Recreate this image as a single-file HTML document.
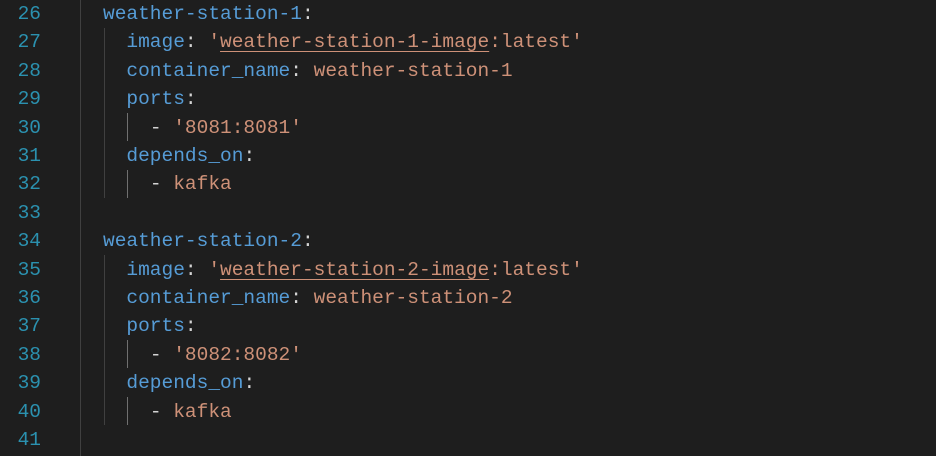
<!DOCTYPE html>
<html><head><style>
body{margin:0;background:#1e1e1e;width:936px;height:456px;overflow:hidden;position:relative;font-family:"Liberation Mono",monospace;font-size:19.5px;}
.l{position:absolute;left:0;height:28.4px;line-height:28.4px;white-space:pre;}
.n{position:absolute;left:0;width:41px;text-align:right;color:#2b91af;}
.c{position:absolute;left:103px;}
.k{color:#569cd6}.s{color:#ce9178}.p{color:#d4d4d4}
.u{text-decoration:underline;text-decoration-color:#ce9178;text-underline-offset:4px;}
.g{position:absolute;width:1px;background:#404040;}
</style></head><body>
<div class="g" style="left:80px;top:0;height:456px"></div>
<div class="g" style="left:104px;top:28px;height:170px"></div>
<div class="g" style="left:104px;top:255px;height:170px"></div>
<div class="g" style="left:127px;top:113px;height:28px;background:#707070"></div>
<div class="g" style="left:127px;top:170px;height:28px;background:#707070"></div>
<div class="g" style="left:127px;top:340px;height:28px;background:#707070"></div>
<div class="g" style="left:127px;top:397px;height:28px;background:#707070"></div>
<div class="l" style="top:0"><span class="n">26</span><span class="c"><span class="k">weather-station-1</span><span class="p">:</span></span></div>
<div class="l" style="top:28.4px"><span class="n">27</span><span class="c">  <span class="k">image</span><span class="p">: </span><span class="s">'<span class="u">weather-station-1-image</span>:latest'</span></span></div>
<div class="l" style="top:56.8px"><span class="n">28</span><span class="c">  <span class="k">container_name</span><span class="p">: </span><span class="s">weather-station-1</span></span></div>
<div class="l" style="top:85.2px"><span class="n">29</span><span class="c">  <span class="k">ports</span><span class="p">:</span></span></div>
<div class="l" style="top:113.6px"><span class="n">30</span><span class="c">    <span class="p">- </span><span class="s">'8081:8081'</span></span></div>
<div class="l" style="top:142px"><span class="n">31</span><span class="c">  <span class="k">depends_on</span><span class="p">:</span></span></div>
<div class="l" style="top:170.4px"><span class="n">32</span><span class="c">    <span class="p">- </span><span class="s">kafka</span></span></div>
<div class="l" style="top:198.8px"><span class="n">33</span></div>
<div class="l" style="top:227.2px"><span class="n">34</span><span class="c"><span class="k">weather-station-2</span><span class="p">:</span></span></div>
<div class="l" style="top:255.6px"><span class="n">35</span><span class="c">  <span class="k">image</span><span class="p">: </span><span class="s">'<span class="u">weather-station-2-image</span>:latest'</span></span></div>
<div class="l" style="top:284px"><span class="n">36</span><span class="c">  <span class="k">container_name</span><span class="p">: </span><span class="s">weather-station-2</span></span></div>
<div class="l" style="top:312.4px"><span class="n">37</span><span class="c">  <span class="k">ports</span><span class="p">:</span></span></div>
<div class="l" style="top:340.8px"><span class="n">38</span><span class="c">    <span class="p">- </span><span class="s">'8082:8082'</span></span></div>
<div class="l" style="top:369.2px"><span class="n">39</span><span class="c">  <span class="k">depends_on</span><span class="p">:</span></span></div>
<div class="l" style="top:397.6px"><span class="n">40</span><span class="c">    <span class="p">- </span><span class="s">kafka</span></span></div>
<div class="l" style="top:426px"><span class="n">41</span></div>
</body></html>
